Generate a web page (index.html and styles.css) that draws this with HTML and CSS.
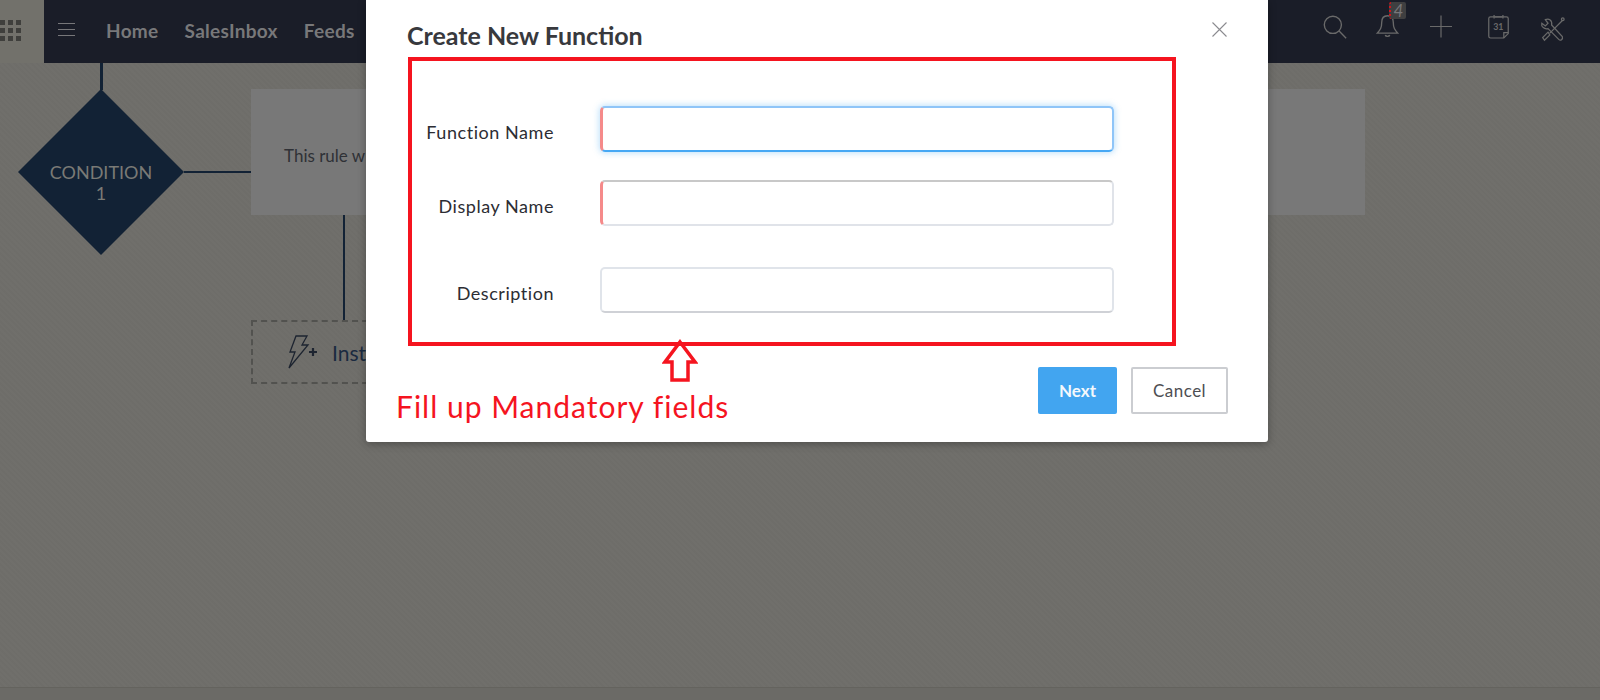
FILE: index.html
```html
<!DOCTYPE html>
<html lang="en">
<head>
<meta charset="utf-8">
<title>Create New Function</title>
<link rel="stylesheet" href="styles.css">
</head>
<body>
<div class="app">
  <header class="topbar">
    <div class="apps">
      <svg class="apps-icon" width="24" height="24" viewBox="0 0 24 24"><g fill="#3f3f3c"><rect x="0" y="1" width="5" height="5"/><rect x="8" y="1" width="5" height="5"/><rect x="16" y="1" width="5" height="5"/><rect x="0" y="9" width="5" height="5"/><rect x="8" y="9" width="5" height="5"/><rect x="16" y="9" width="5" height="5"/><rect x="0" y="17" width="5" height="5"/><rect x="8" y="17" width="5" height="5"/><rect x="16" y="17" width="5" height="5"/></g></svg>
    </div>
    <nav class="nav">
      <svg class="burger" width="17" height="13" viewBox="0 0 17 13"><path d="M0 .5h17M0 6.5h17M0 12.5h17" stroke="#77777a" fill="none"/></svg>
      <a class="nav-link">Home</a>
      <a class="nav-link">SalesInbox</a>
      <a class="nav-link">Feeds</a>
    </nav>
    <div class="tools">
      <svg class="tool" width="24" height="24" viewBox="0 0 28 28"><g fill="none" stroke="#6a6a6a" stroke-width="1.6"><circle cx="11.500" cy="11.500" r="10"/><path d="M18.500 18.500L27 27"/></g></svg>
      <span class="bell">
        <svg class="tool" width="25" height="25" viewBox="0 0 28 28"><g fill="none" stroke="#6a6a6a" stroke-width="1.5"><path d="M14 2c-4.700 0-6.500 3.500-6.500 7.500 0 6-1.500 8-5 12h23c-3.500-4-5-6-5-12C20.500 5.500 18.700 2 14 2z"/><path d="M11.500 23.500c.5 2 4.500 2 5 0"/></g></svg>
        <span class="badge">4</span>
      </span>
      <svg class="tool" width="22" height="23" viewBox="0 0 24 24"><path d="M12 0v24M0 12h24" stroke="#6a6a6a" stroke-width="1.300" fill="none"/></svg>
      <svg class="tool tool-cal" width="23" height="25" viewBox="0 0 26 28"><g fill="none" stroke="#6a6a6a" stroke-width="1.400"><path d="M4 3h18a2 2 0 0 1 2 2v17l-5 5H4a2 2 0 0 1-2-2V5a2 2 0 0 1 2-2z"/><path d="M8 1v4M18 1v4M9 3h8M24 21h-5v6"/></g><text x="7" y="18" class="cal-day">31</text></svg>
      <svg class="tool tool-wrench" width="25" height="25" viewBox="0 0 28 28"><g fill="none" stroke="#6a6a6a" stroke-width="1.400"><path d="M2 7l4 3 3-3-3-4c4-2 8 1 7 6l12 13c1 3-2 5-4 3L9 13C5 14 1 11 2 7z"/><path d="M24 5L11 18M9 17l-6 6 2 3 6-6zM24 5l1-1"/><circle cx="25.500" cy="2.500" r="1.500"/></g></svg>
    </div>
  </header>

  <main class="canvas">
    <span class="line line-top"></span>
    <svg class="diamond" width="166" height="166" viewBox="0 0 166 166"><polygon points="83,0 166,83 83,166 0,83" fill="#122235"/></svg>
    <div class="diamond-label">CONDITION<br>1</div>
    <span class="line line-h"></span>
    <div class="rule-box">This rule will be executed</div>
    <span class="line line-v"></span>
    <div class="instant">
      <svg width="32" height="34" viewBox="0 0 32 34"><g fill="none" stroke="#1d2430" stroke-width="1.300"><path d="M10 1h11l-5 9h6L3 33l6-16H4z"/></g><path d="M23 17h8M27 13v8" stroke="#1d2430" stroke-width="2.200"/></svg>
      <span class="instant-text">Instant Actions</span>
    </div>
  </main>
  <footer class="pagefoot"></footer>

  <section class="modal">
    <h1 class="modal-title">Create New Function</h1>
    <svg class="close" width="15" height="15" viewBox="0 0 15 15"><path d="M.5.5l14 14M14.500.5l-14 14" stroke="#8b8b8f" stroke-width="1.100" fill="none"/></svg>
    <form class="fields">
      <label class="label">Function Name</label>
      <input class="input input-focus" type="text">
      <label class="label">Display Name</label>
      <input class="input input-req" type="text">
      <label class="label label-desc">Description</label>
      <input class="input input-desc" type="text">
    </form>
    <div class="actions">
      <button class="btn btn-next" type="button">Next</button>
      <button class="btn btn-cancel" type="button">Cancel</button>
    </div>
    <div class="note-box"></div>
    <svg class="note-arrow" width="36" height="44" viewBox="0 0 36 44"><polygon points="18,3 33,23 26,23 26,41 10,41 10,23 3,23" fill="none" stroke="#f5141f" stroke-width="3.500"/></svg>
    <div class="note-text">Fill up Mandatory fields</div>
  </section>
</div>
</body>
</html>
```
FILE: styles.css
```css
* { box-sizing: border-box; }
html, body { margin: 0; padding: 0; }
body { font-family: Lato, "Open Sans", Arial, sans-serif; background: #6f6e6a; }

.app { position: relative; width: 1600px; height: 700px; overflow: hidden; display: flex; flex-direction: column; }

.topbar { height: 63px; flex: none; display: flex; background: #1a1d28; }
.apps { width: 44px; flex: none; background: #72716b; display: flex; align-items: center; }
.apps-icon { margin-top: -2px; }
.nav { display: flex; align-items: center; padding-left: 14px; }
.burger { margin-right: 31px; margin-top: -4px; }
.nav-link { font-size: 19px; font-weight: 700; letter-spacing: .3px; color: #78787a; margin-right: 26px; margin-top: -3px; }
.tools { margin-left: auto; display: flex; align-items: center; gap: 30px; padding-right: 35px; padding-bottom: 10px; }
.tool { display: block; }
.tool-cal { margin-left: 5px; }
.tool-wrench { margin-top: 5px; }
.bell { position: relative; display: block; margin-left: -2px; }
.badge { position: absolute; left: 14px; top: -12px; width: 17px; height: 17px; background: #3f3f40; color: #77777a; font-size: 17px; font-style: italic; line-height: 17px; text-align: center; border-radius: 2px; border-left: 2px dotted #d0141c; }
.cal-day { font-size: 10px; fill: #6a6a6a; font-family: Lato, sans-serif; font-weight: 700; }

.canvas { position: relative; flex: 1; background: #6f6e6a repeating-linear-gradient(45deg, rgba(255,255,255,.006) 0 2px, rgba(0,0,0,.006) 2px 4px); }
.pagefoot { height: 13px; flex: none; background: #6b6a66; border-top: 1px solid #64635e; }
.line { position: absolute; background: #122235; }
.line-top { left: 100px; top: 0; width: 3px; height: 27px; }
.diamond { position: absolute; left: 18px; top: 26px; }
.diamond-label { position: absolute; left: 18px; top: 99px; width: 166px; text-align: center; font-size: 18px; line-height: 21px; color: #7a7a76; }
.line-h { left: 184px; top: 108px; width: 67px; height: 2px; }
.rule-box { position: absolute; left: 251px; top: 26px; width: 1114px; height: 126px; background: #787878; color: #2f3136; font-size: 17px; padding: 56px 33px 0; }
.line-v { left: 343px; top: 152px; width: 2px; height: 105px; }
.instant { position: absolute; left: 251px; top: 257px; width: 400px; height: 64px; border: 2px dashed #52524f; display: flex; align-items: center; padding-left: 33px; gap: 14px; }
.instant-text { font-size: 21px; color: #1a2a40; }

.modal { position: absolute; left: 366px; top: 0; width: 902px; height: 442px; background: #fff; border-radius: 0 0 3px 3px; box-shadow: 0 2px 8px rgba(0,0,0,.3); display: flex; flex-direction: column; }
.modal-title { margin: 0; height: 57px; padding: 22px 0 0 41px; font-size: 25px; font-weight: 700; line-height: 27px; color: #38393d; letter-spacing: 0; }
.close { position: absolute; left: 846px; top: 22px; }
.fields { display: grid; grid-template-columns: 188px 514px; grid-template-rows: 46px 46px 59px; column-gap: 46px; row-gap: 28px; margin-top: 49px; align-items: center; }
.label { font-size: 18px; letter-spacing: .55px; color: #2c2d33; text-align: right; padding-top: 5px; }
.label-desc { margin-top: 13px; }
.input { width: 514px; height: 100%; background: #fff; border: 2px solid #e0e3e9; border-top-color: #c8c8c8; border-radius: 5px; outline: none; padding: 0 8px; }
.input-focus { border-color: #8fc5f8; border-bottom-color: #46a8f4; box-shadow: 0 0 6px 1px rgba(70,168,244,.35); border-left: 3px solid #f58a8a; }
.input-req { border-left: 3px solid #f58a8a; }
.input-desc { height: 46px; align-self: end; border-color: #e0e4ea; border-bottom-color: #cfd1d6; }
.actions { display: flex; justify-content: flex-end; gap: 14px; padding-right: 40px; margin-top: 54px; }
.btn { height: 47px; font-family: Lato, sans-serif; border-radius: 2px; padding: 0; }
.btn-next { width: 79px; font-size: 17px; background: #42a5f0; border: 0; color: #f4f8fc; font-weight: 700; }
.btn-cancel { width: 97px; font-size: 17px; letter-spacing: .5px; background: #fff; border: 2px solid #cbcdd1; color: #4d4e52; }

.note-box { position: absolute; left: 42px; top: 57px; width: 768px; height: 289px; border: 4px solid #f5141f; pointer-events: none; }
.note-arrow { position: absolute; left: 296px; top: 339px; }
.note-text { position: absolute; left: 30px; top: 386px; font-size: 30px; letter-spacing: 1px; line-height: 40px; color: #f5141f; white-space: nowrap; }
```
